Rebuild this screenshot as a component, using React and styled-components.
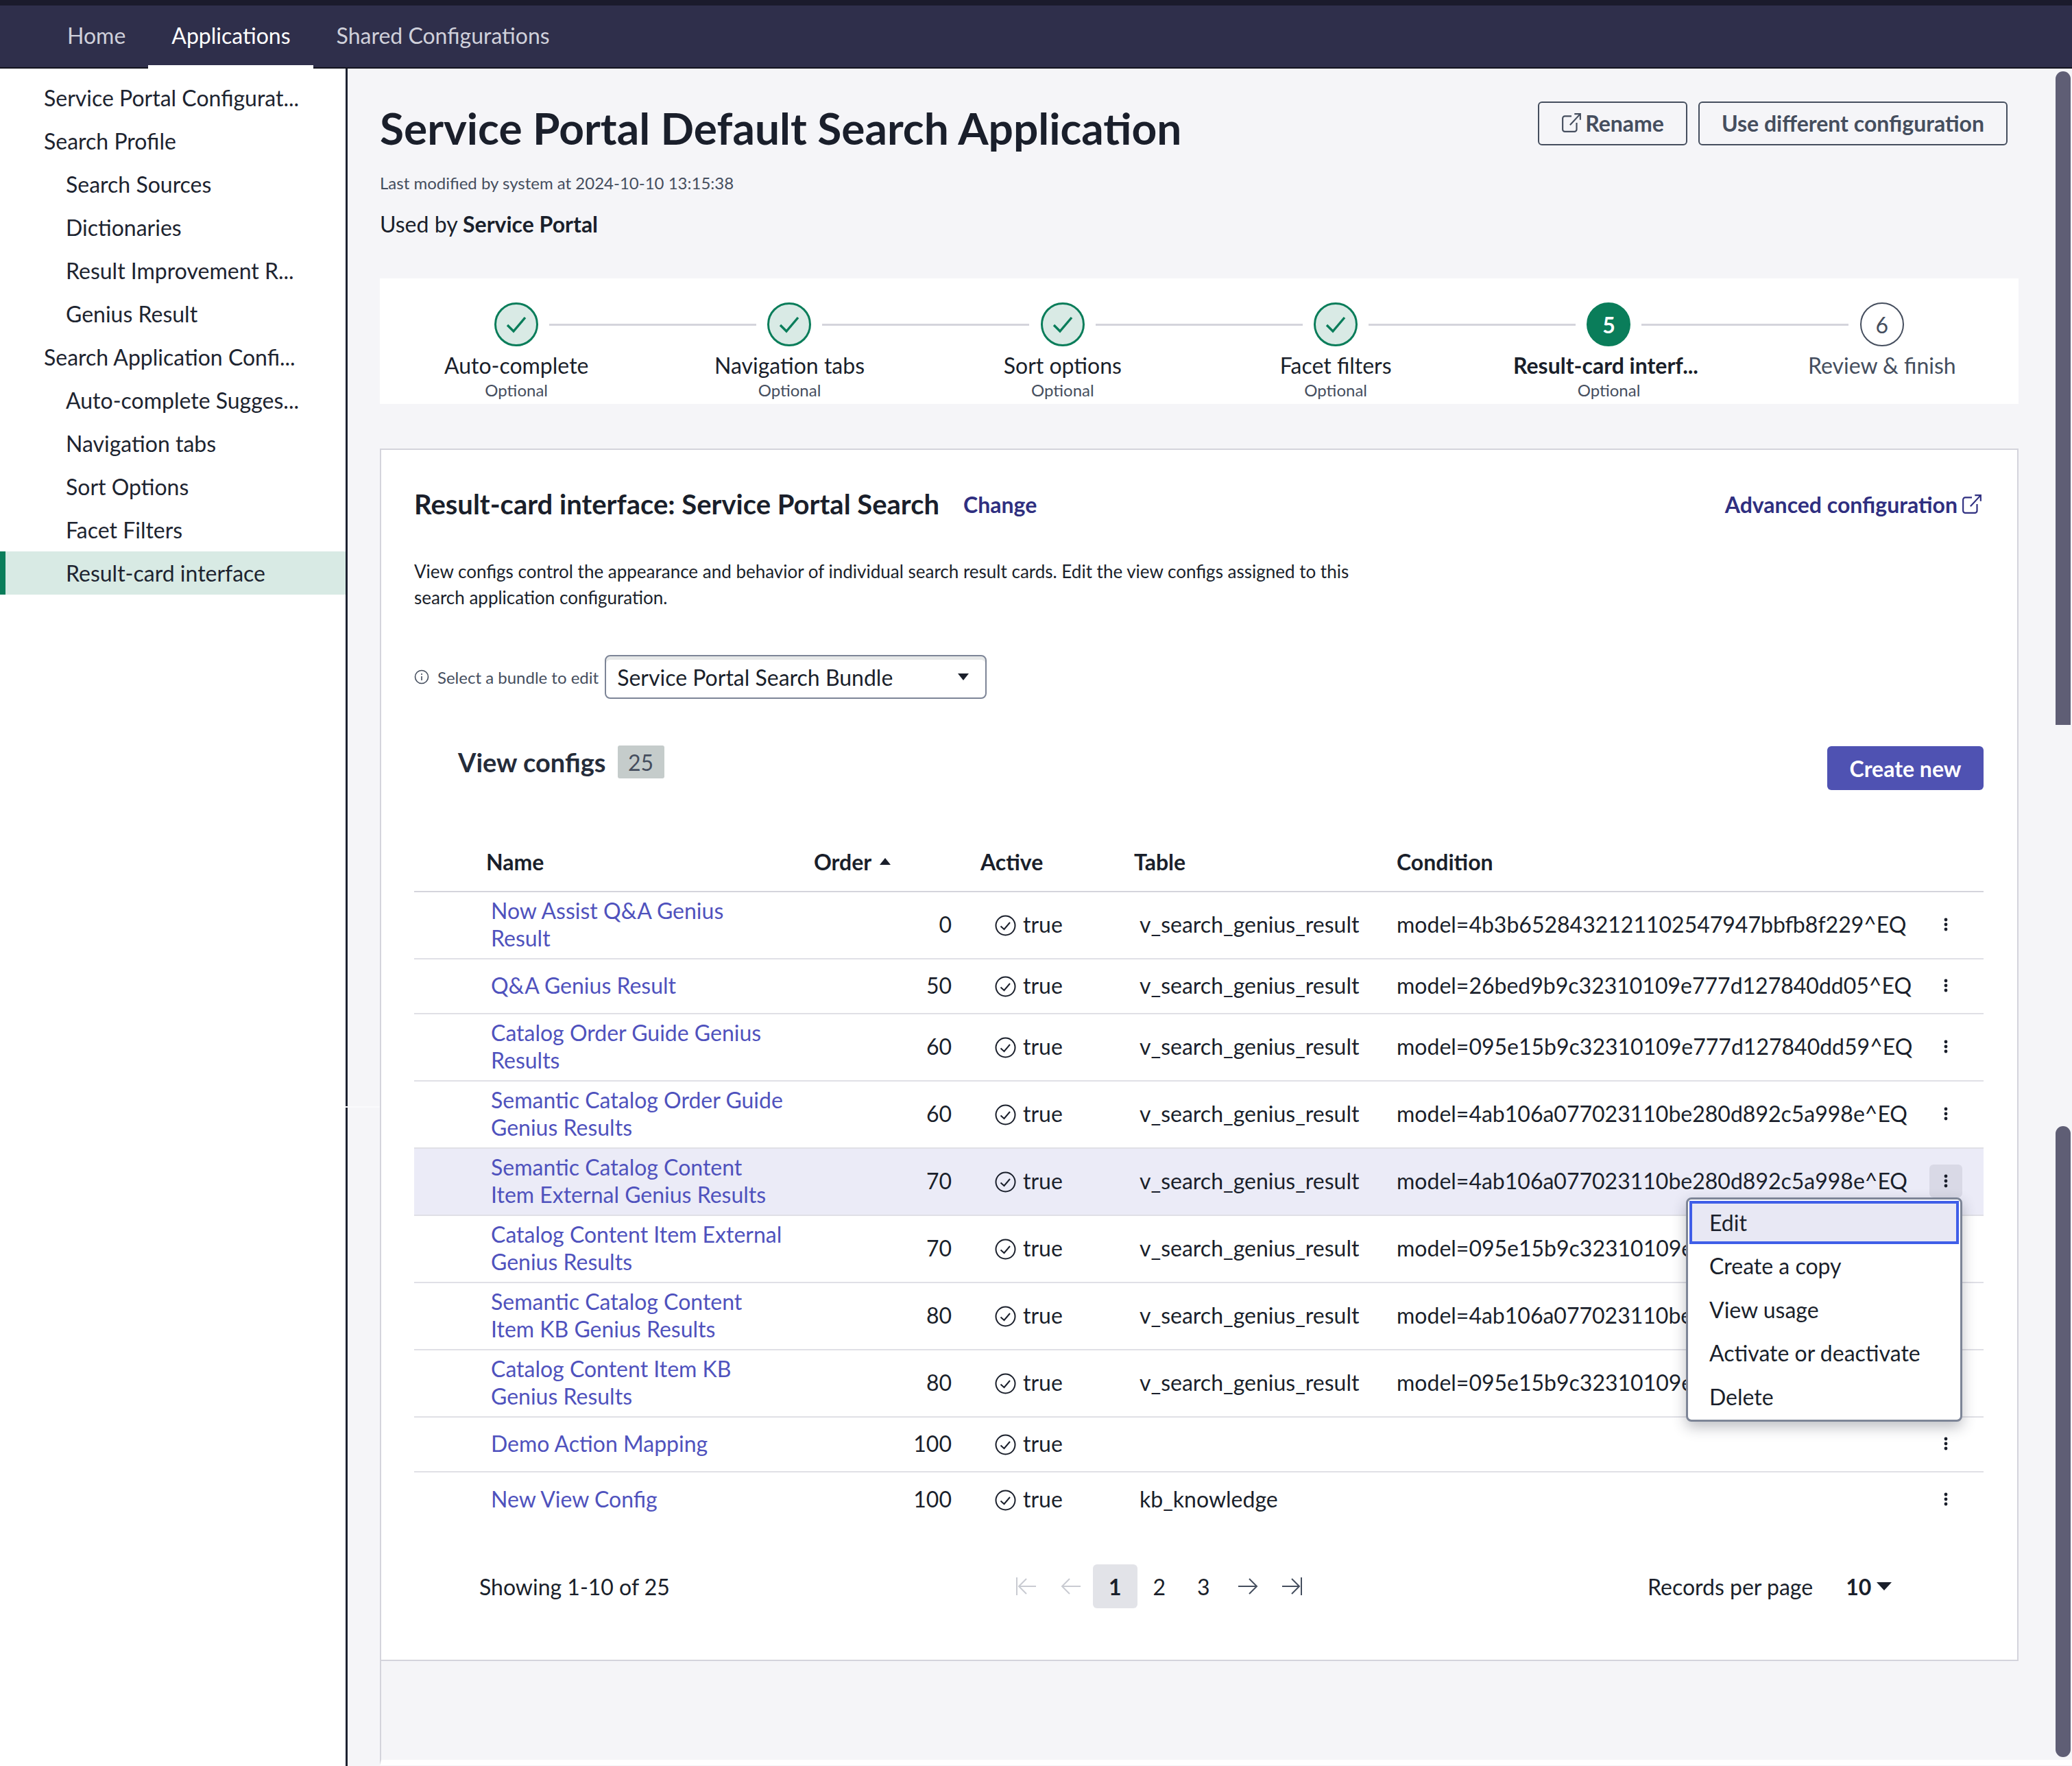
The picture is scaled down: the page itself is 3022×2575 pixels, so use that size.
import React from 'react';
import styled, { createGlobalStyle } from 'styled-components';

const GlobalStyle = createGlobalStyle`
  html, body { margin: 0; height: 100%; overflow: hidden; }
  body { font-family: Lato, "Open Sans", sans-serif; color: #1a1f2b; background: #fff; }
  #root { height: 100%; }
  * { box-sizing: border-box; }
`;

const Page = styled.div`
  position: relative;
  height: 2575px;
  display: flex;
  flex-direction: column;
  border-top: 8px solid #1b1b2c;
  overflow: hidden;
`;

const Nav = styled.nav`
  height: 92px;
  flex: none;
  display: flex;
  padding-left: 64px;
  background: #2f2f4b;
  border-bottom: 2px solid #14141f;
`;

const Tab = styled.div`
  height: 92px;
  padding: 0 33px 0 34px;
  display: flex;
  align-items: center;
  font-size: 32px;
  color: ${p => (p.$active ? '#fff' : '#cfd0da')};
  border-bottom: 5px solid ${p => (p.$active ? '#fff' : 'transparent')};
`;

const Body = styled.div`
  flex: 1;
  display: flex;
  min-height: 0;
`;

const Sidebar = styled.aside`
  width: 507px;
  flex: none;
  padding-top: 11px;
  background: #fff;
  border-right: 3px solid #1d2230;
`;

const SideItem = styled.div`
  height: 63px;
  display: flex;
  align-items: center;
  padding-bottom: 1px;
  padding-left: ${p => (p.$nested ? '96px' : '64px')};
  font-size: 32px;
  color: #1d2430;
  background: ${p => (p.$active ? '#d8eae4' : 'transparent')};
  border-left: ${p => (p.$active ? '8px solid #0a7d5a' : '0')};
  ${p => p.$active && 'padding-left: 88px;'}
`;

const Main = styled.main`
  flex: 1;
  padding: 48px 78px 0 47px;
  background: #f5f5f8;
`;

const TitleRow = styled.div`
  display: flex;
  justify-content: space-between;
  align-items: flex-start;
`;

const Title = styled.h1`
  margin: 0;
  font-size: 64px;
  line-height: 78px;
  font-weight: 700;
  color: #1a1f2b;
`;

const HeadButtons = styled.div`
  display: flex;
  gap: 16px;
  margin-right: 16px;
`;

const OutlineButton = styled.button`
  height: 64px;
  padding: 0 32px 2px;
  display: flex;
  align-items: center;
  gap: 5px;
  font: 700 32px Lato, sans-serif;
  color: #454e5e;
  background: transparent;
  border: 2px solid #454e5e;
  border-radius: 6px;
`;

const Modified = styled.div`
  margin-top: 25px;
  font-size: 24px;
  line-height: 32px;
  color: #454e5e;
`;

const UsedBy = styled.div`
  margin-top: 24px;
  font-size: 32px;
  line-height: 40px;
  b { font-weight: 700; }
`;

const Stepper = styled.div`
  margin-top: 59px;
  height: 183px;
  display: grid;
  grid-template-columns: repeat(6, 1fr);
  padding-top: 35px;
  background: #fff;
`;

const Step = styled.div`
  position: relative;
  display: flex;
  flex-direction: column;
  align-items: center;
`;

const Connector = styled.span`
  position: absolute;
  top: 31px;
  left: calc(50% + 48px);
  width: 302px;
  height: 3px;
  background: #d4d4dc;
`;

const Circle = styled.div`
  width: 64px;
  height: 64px;
  border-radius: 50%;
  display: flex;
  align-items: center;
  justify-content: center;
  font-size: 32px;
  font-weight: ${p => (p.$state === 'current' ? 700 : 400)};
  color: ${p => (p.$state === 'current' ? '#fff' : '#454e5e')};
  background: ${p => ({ done: '#d9eae5', current: '#0a7d5a', todo: '#fff' }[p.$state])};
  border: ${p => (p.$state === 'todo' ? 2 : 3)}px solid ${p => ({ done: '#0a7d5a', current: '#0a7d5a', todo: '#454e5e' }[p.$state])};
`;

const StepLabel = styled.div`
  margin-top: 8px;
  margin-right: ${p => (p.$bold ? '9px' : '0')};
  font-size: 32px;
  line-height: 40px;
  font-weight: ${p => (p.$bold ? 700 : 400)};
  color: ${p => (p.$muted ? '#454e5e' : '#1a1f2b')};
`;

const StepHint = styled.div`
  font-size: 24px;
  line-height: 32px;
  color: #454e5e;
`;

const Card = styled.section`
  position: relative;
  margin-top: 65px;
  height: 1768px;
  padding: 0 49px 0 48px;
  background: #fff;
  border: 2px solid #d4d4dc;
`;

const CardHead = styled.div`
  height: 158px;
  display: flex;
  align-items: center;
`;

const CardTitle = styled.h2`
  margin: 0;
  font-size: 40px;
  font-weight: 700;
`;

const TextLink = styled.a`
  font-size: 32px;
  font-weight: 700;
  color: #2f2f80;
  margin-left: ${p => (p.$left ? '35px' : '0')};
`;

const AdvancedLink = styled(TextLink)`
  margin-left: auto;
  margin-right: 2px;
  display: flex;
  align-items: center;
  gap: 6px;
`;

const Description = styled.p`
  margin: 0;
  width: 1400px;
  font-size: 26px;
  line-height: 38px;
`;

const BundleRow = styled.div`
  margin-top: 65px;
  display: flex;
  align-items: center;
  font-size: 24px;
  color: #454e5e;
`;

const BundleLabel = styled.span`
  margin: 0 9px 0 12px;
`;

const Select = styled.div`
  width: 557px;
  height: 64px;
  padding: 0 24px 0 16px;
  display: flex;
  align-items: center;
  justify-content: space-between;
  font-size: 32px;
  color: #1a1f2b;
  background: #fff;
  border: 2px solid #7d8597;
  border-radius: 8px;
  box-shadow: inset 0 5px 0 #e6e8e8;
`;

const Caret = styled.span`
  width: 0;
  height: 0;
  border-left: ${p => (p.$large ? 11 : 8)}px solid transparent;
  border-right: ${p => (p.$large ? 11 : 8)}px solid transparent;
  border-${p => (p.$up ? 'bottom' : 'top')}: ${p => (p.$large ? 12 : 10)}px solid #1a1f2b;
`;

const ConfigsRow = styled.div`
  margin-top: 68px;
  display: flex;
  align-items: flex-start;
  padding-left: 64px;
`;

const ConfigsTitle = styled.h3`
  margin: 0;
  font-size: 38px;
  line-height: 48px;
  font-weight: 700;
  color: #252c3a;
`;

const CountBadge = styled.span`
  width: 68px;
  height: 48px;
  margin-left: 17px;
  display: flex;
  align-items: center;
  justify-content: center;
  font-size: 32px;
  color: #454e5e;
  background: #c5cccb;
  border-radius: 3px;
`;

const PrimaryButton = styled.button`
  margin-left: auto;
  margin-top: 1px;
  width: 228px;
  height: 64px;
  font: 700 32px Lato, sans-serif;
  color: #fff;
  background: #4f52b2;
  border: 0;
  border-radius: 6px;
`;

const Table = styled.div`
  margin-top: 67px;
`;

const columns = `
  display: grid;
  grid-template-columns: 112px 471px 243px 224px 383px 1fr 80px;
  align-items: center;
`;

const HeadRow = styled.div`
  ${columns}
  height: 82px;
  padding-bottom: 6px;
  font-size: 32px;
  font-weight: 700;
  border-bottom: 2px solid #d4d4dc;
`;

const HeadCell = styled.div`
  grid-column: ${p => p.$col};
  display: flex;
  align-items: center;
  gap: 12px;
`;

const NameHead = styled(HeadCell)`
  margin-left: -7px;
`;

const Row = styled.div`
  ${columns}
  height: ${p => (p.$tall ? '98px' : '80px')};
  padding-bottom: 3px;
  font-size: 32px;
  background: ${p => (p.$hover ? '#ebebf7' : 'transparent')};
  border-bottom: ${p => (p.$last ? '0' : '2px solid #e0e0e6')};
`;

const NameLink = styled.a`
  grid-column: 2;
  width: 432px;
  line-height: 40px;
  color: #4f52bd;
`;

const OrderCell = styled.div`
  padding-right: 42px;
  text-align: right;
`;

const ActiveCell = styled.div`
  display: flex;
  align-items: center;
  gap: 10px;
  padding-left: 21px;
  svg { margin-top: 4px; }
`;

const TableCell = styled.div`
  padding-left: 8px;
`;

const ConditionCell = styled.div`
  white-space: nowrap;
`;

const DotsButton = styled.div`
  justify-self: end;
  margin-right: 31px;
  width: 48px;
  height: 48px;
  display: flex;
  align-items: center;
  justify-content: center;
  border-radius: 6px;
  background: ${p => (p.$open ? '#d9d9e6' : 'transparent')};
`;

const Menu = styled.div`
  position: absolute;
  top: 1090px;
  left: 1903px;
  width: 403px;
  height: 327px;
  padding: 2px;
  display: flex;
  flex-direction: column;
  background: #fff;
  border: 3px solid #7d8597;
  border-radius: 8px;
  box-shadow: 0 8px 20px rgba(40, 44, 60, 0.3);
  z-index: 2;
`;

const MenuItem = styled.div`
  height: ${p => (p.$focus ? '63px' : '64px')};
  padding-left: ${p => (p.$focus ? '25px' : '29px')};
  display: flex;
  align-items: center;
  font-size: 32px;
  background: ${p => (p.$focus ? '#e8e8f4' : 'transparent')};
  border: ${p => (p.$focus ? '4px solid #3f5ee8' : '0')};
`;

const Pager = styled.div`
  margin-top: 54px;
  height: 64px;
  padding-left: 95px;
  display: grid;
  grid-template-columns: 766px 938px 1fr;
  align-items: center;
  font-size: 32px;
`;

const PageList = styled.div`
  display: flex;
  align-items: center;
  height: 64px;
`;

const PageButton = styled.div`
  width: 64.5px;
  height: 64px;
  display: flex;
  align-items: center;
  justify-content: center;
  font-weight: ${p => (p.$current ? 700 : 400)};
  background: ${p => (p.$current ? '#e2e3e8' : 'transparent')};
  border-radius: 6px;
`;

const RecordsPer = styled.div`
  display: flex;
  align-items: center;
`;

const RecordsCount = styled.b`
  margin-left: 48px;
  margin-right: 8px;
  font-weight: 700;
`;

const FootBand = styled.div`
  height: 152px;
  margin-right: -78px;
  border-left: 2px solid #d4d4dc;
  border-bottom: 8px solid #fff;
`;

const ScrollThumb = styled.div`
  position: absolute;
  right: 2px;
  top: ${p => p.$top}px;
  width: 22px;
  height: ${p => p.$height}px;
  background: #5f5e75;
  border-radius: ${p => (p.$open ? '11px' : '11px 11px 0 0')};
`;

const Seam = styled.div`
  position: absolute;
  top: 1605px;
  left: 503px;
  width: 51px;
  height: 2px;
  background: #fafafc;
`;

const ExternalIcon = ({ size = 30 }) => (
  <svg width={size} height={size} viewBox="0 0 28 28" fill="none" stroke="currentColor" strokeWidth="2">
    <path d="M14 5H5a3 3 0 0 0-3 3v15a3 3 0 0 0 3 3h13a3 3 0 0 0 3-3v-9" />
    <path d="M12 17 26 2M18 2h8v8" />
  </svg>
);

const Check = () => (
  <svg width="34" height="34" viewBox="0 0 34 34" fill="none" stroke="#0a7d5a" strokeWidth="3.4">
    <path d="M4 18l9 9 17-20" />
  </svg>
);

const ActiveIcon = () => (
  <svg width="31" height="31" viewBox="0 0 31 31" fill="none" stroke="#1a1f2b" strokeWidth="2">
    <circle cx="15.5" cy="15.5" r="14" />
    <path d="M8.5 16.5l5 4.5 8.5-10" />
  </svg>
);

const InfoIcon = () => (
  <svg width="22" height="22" viewBox="0 0 22 22" fill="none" stroke="#454e5e" strokeWidth="1.6">
    <circle cx="11" cy="11" r="9.5" />
    <path d="M11 10v6M11 6v2" />
  </svg>
);

const Dots = () => (
  <svg width="6" height="20" viewBox="0 0 6 20" fill="#1a1f2b">
    <circle cx="3" cy="3" r="2.4" />
    <circle cx="3" cy="10" r="2.4" />
    <circle cx="3" cy="17" r="2.4" />
  </svg>
);

const PageArrow = ({ dir, stop, off }) => (
  <svg width="32" height="32" viewBox="0 0 32 32" fill="none" stroke={off ? '#c9cbd2' : '#454e5e'} strokeWidth="2"
    style={{ transform: dir === 'left' ? 'scaleX(-1)' : undefined }}>
    <path d={stop ? 'M2 16h25M16 5l11 11-11 11M30 3v26' : 'M2 16h27M18 5l11 11-11 11'} />
  </svg>
);

const sideItems = [
  ['Service Portal Configurat...'],
  ['Search Profile'],
  ['Search Sources', true],
  ['Dictionaries', true],
  ['Result Improvement R...', true],
  ['Genius Result', true],
  ['Search Application Confi...'],
  ['Auto-complete Sugges...', true],
  ['Navigation tabs', true],
  ['Sort Options', true],
  ['Facet Filters', true],
  ['Result-card interface', true, true],
];

const steps = [
  { label: 'Auto-complete', state: 'done' },
  { label: 'Navigation tabs', state: 'done' },
  { label: 'Sort options', state: 'done' },
  { label: 'Facet filters', state: 'done' },
  { label: 'Result-card interf...', state: 'current', n: 5 },
  { label: 'Review & finish', state: 'todo', n: 6 },
];

const G = 'v_search_genius_result';
const rows = [
  { name: 'Now Assist Q&A Genius Result', order: 0, table: G, cond: 'model=4b3b6528432121102547947bbfb8f229^EQ', tall: true },
  { name: 'Q&A Genius Result', order: 50, table: G, cond: 'model=26bed9b9c32310109e777d127840dd05^EQ' },
  { name: 'Catalog Order Guide Genius Results', order: 60, table: G, cond: 'model=095e15b9c32310109e777d127840dd59^EQ', tall: true },
  { name: 'Semantic Catalog Order Guide Genius Results', order: 60, table: G, cond: 'model=4ab106a077023110be280d892c5a998e^EQ', tall: true },
  { name: 'Semantic Catalog Content Item External Genius Results', order: 70, table: G, cond: 'model=4ab106a077023110be280d892c5a998e^EQ', tall: true, hover: true },
  { name: 'Catalog Content Item External Genius Results', order: 70, table: G, cond: 'model=095e15b9c32310109e777d127840dd59^EQ', tall: true },
  { name: 'Semantic Catalog Content Item KB Genius Results', order: 80, table: G, cond: 'model=4ab106a077023110be280d892c5a998e^EQ', tall: true },
  { name: 'Catalog Content Item KB Genius Results', order: 80, table: G, cond: 'model=095e15b9c32310109e777d127840dd59^EQ', tall: true },
  { name: 'Demo Action Mapping', order: 100, table: '', cond: '' },
  { name: 'New View Config', order: 100, table: 'kb_knowledge', cond: '', last: true },
];

export default function App() {
  return (
    <Page>
      <GlobalStyle />
      <Nav>
        <Tab>Home</Tab>
        <Tab $active>Applications</Tab>
        <Tab>Shared Configurations</Tab>
      </Nav>
      <Body>
        <Sidebar>
          {sideItems.map(([label, nested, active]) => (
            <SideItem key={label} $nested={nested} $active={active}>{label}</SideItem>
          ))}
        </Sidebar>
        <Main>
          <TitleRow>
            <Title>Service Portal Default Search Application</Title>
            <HeadButtons>
              <OutlineButton><ExternalIcon />Rename</OutlineButton>
              <OutlineButton>Use different configuration</OutlineButton>
            </HeadButtons>
          </TitleRow>
          <Modified>Last modified by system at 2024-10-10 13:15:38</Modified>
          <UsedBy>Used by <b>Service Portal</b></UsedBy>
          <Stepper>
            {steps.map((s, i) => (
              <Step key={s.label}>
                <Circle $state={s.state}>{s.state === 'done' ? <Check /> : s.n}</Circle>
                {i < 5 && <Connector />}
                <StepLabel $bold={s.state === 'current'} $muted={s.state === 'todo'}>{s.label}</StepLabel>
                {s.state !== 'todo' && <StepHint>Optional</StepHint>}
              </Step>
            ))}
          </Stepper>
          <Card>
            <CardHead>
              <CardTitle>Result-card interface: Service Portal Search</CardTitle>
              <TextLink $left>Change</TextLink>
              <AdvancedLink>Advanced configuration <ExternalIcon /></AdvancedLink>
            </CardHead>
            <Description>
              View configs control the appearance and behavior of individual search result cards. Edit the view configs assigned to this search application configuration.
            </Description>
            <BundleRow>
              <InfoIcon />
              <BundleLabel>Select a bundle to edit</BundleLabel>
              <Select>Service Portal Search Bundle<Caret /></Select>
            </BundleRow>
            <ConfigsRow>
              <ConfigsTitle>View configs</ConfigsTitle>
              <CountBadge>25</CountBadge>
              <PrimaryButton>Create new</PrimaryButton>
            </ConfigsRow>
            <Table>
              <HeadRow>
                <NameHead $col={2}>Name</NameHead>
                <HeadCell $col={3}>Order <Caret $up /></HeadCell>
                <HeadCell $col={4}>Active</HeadCell>
                <HeadCell $col={5}>Table</HeadCell>
                <HeadCell $col={6}>Condition</HeadCell>
              </HeadRow>
              {rows.map(r => (
                <Row key={r.name} $tall={r.tall} $hover={r.hover} $last={r.last}>
                  <NameLink>{r.name}</NameLink>
                  <OrderCell>{r.order}</OrderCell>
                  <ActiveCell><ActiveIcon />true</ActiveCell>
                  <TableCell>{r.table}</TableCell>
                  <ConditionCell>{r.cond}</ConditionCell>
                  <DotsButton $open={r.hover}><Dots /></DotsButton>
                </Row>
              ))}
            </Table>
            <Pager>
              <div>Showing 1-10 of 25</div>
              <PageList>
                <PageButton><PageArrow dir="left" stop off /></PageButton>
                <PageButton><PageArrow dir="left" off /></PageButton>
                <PageButton $current>1</PageButton>
                <PageButton>2</PageButton>
                <PageButton>3</PageButton>
                <PageButton><PageArrow /></PageButton>
                <PageButton><PageArrow stop /></PageButton>
              </PageList>
              <RecordsPer>
                Records per page
                <RecordsCount>10</RecordsCount>
                <Caret $large />
              </RecordsPer>
            </Pager>
            <Menu>
              <MenuItem $focus>Edit</MenuItem>
              <MenuItem>Create a copy</MenuItem>
              <MenuItem>View usage</MenuItem>
              <MenuItem>Activate or deactivate</MenuItem>
              <MenuItem>Delete</MenuItem>
            </Menu>
          </Card>
          <FootBand />
        </Main>
      </Body>
      <Seam />
      <ScrollThumb $top={96} $height={953} />
      <ScrollThumb $top={1634} $height={920} $open />
    </Page>
  );
}
